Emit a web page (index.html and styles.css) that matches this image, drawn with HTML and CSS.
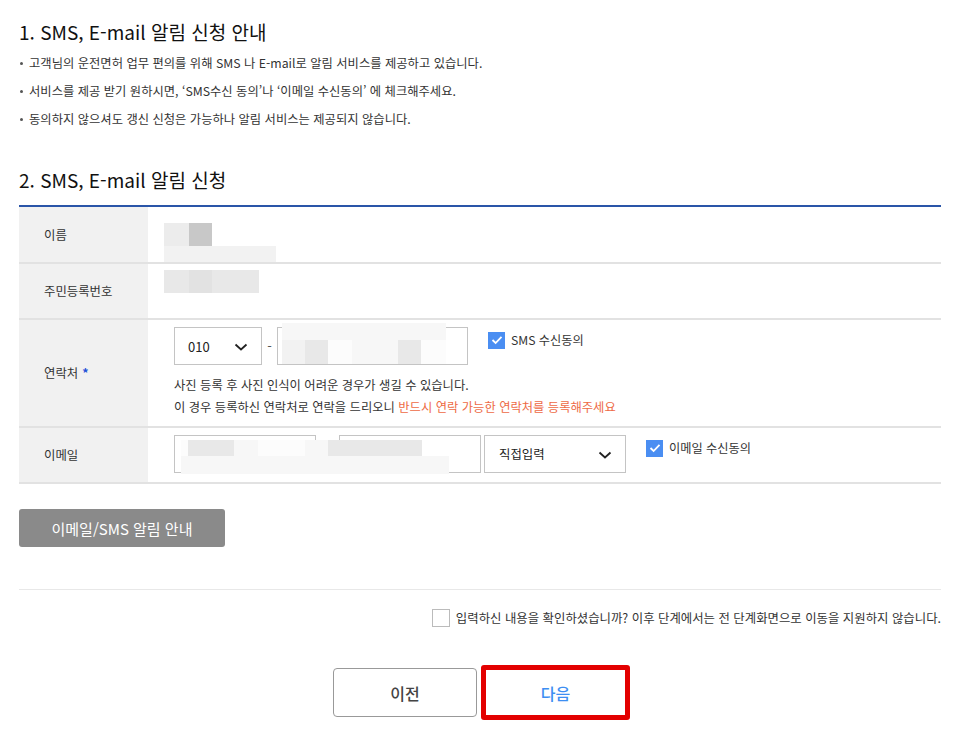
FILE: index.html
```html
<!DOCTYPE html>
<html lang="ko">
<head>
<meta charset="utf-8">
<title>SMS, E-mail 알림 신청</title>
<link rel="stylesheet" href="styles.css">
</head>
<body>
<div class="page">
  <h2 class="title">1. SMS, E-mail 알림 신청 안내</h2>
  <ul class="bullets">
    <li>고객님의 운전면허 업무 편의를 위해 SMS 나 E-mail로 알림 서비스를 제공하고 있습니다.</li>
    <li>서비스를 제공 받기 원하시면, ‘SMS수신 동의’나 ‘이메일 수신동의’ 에 체크해주세요.</li>
    <li>동의하지 않으셔도 갱신 신청은 가능하나 알림 서비스는 제공되지 않습니다.</li>
  </ul>

  <h2 class="title title-2">2. SMS, E-mail 알림 신청</h2>
  <div class="form-table">
    <div class="row row-name">
      <div class="label">이름</div>
      <div class="value">
        <div class="blur blur-name">
          <div class="blur-line"><span class="b w25 c1"></span><span class="b w23 c2"></span></div>
          <div class="blur-line"><span class="b w112 c5"></span></div>
        </div>
      </div>
    </div>
    <div class="row row-rrn">
      <div class="label">주민등록번호</div>
      <div class="value">
        <div class="blur blur-rrn">
          <div class="blur-line"><span class="b w25 c3"></span><span class="b w23 c4"></span><span class="b w24 c3"></span><span class="b w23 c3"></span></div>
        </div>
      </div>
    </div>
    <div class="row row-phone">
      <div class="label">연락처 <span class="req">*</span></div>
      <div class="value">
        <div class="controls">
          <div class="select sel-phone"><span>010</span>
            <svg class="chev" width="14" height="8" viewBox="0 0 14 8"><path d="M1.5 1.5 L7 6.5 L12.5 1.5" fill="none" stroke="#222" stroke-width="1.8"/></svg>
          </div>
          <span class="dash">-</span>
          <div class="input inp-phone">
            <div class="mask mask-phone">
              <div class="blur-line"><span class="b w164 c6"></span></div>
              <div class="blur-line"><span class="b w23 c5"></span><span class="b w23 c3"></span><span class="b w24 c7"></span><span class="b w46 c6"></span><span class="b w23 c3"></span><span class="b w25 c7"></span></div>
            </div>
          </div>
          <label class="check">
            <span class="box on"><svg width="12" height="10" viewBox="0 0 12 10"><path d="M1.5 5 L4.6 8 L10.5 1.8" fill="none" stroke="#fff" stroke-width="1.8"/></svg></span>
            <span>SMS 수신동의</span>
          </label>
        </div>
        <p class="help">사진 등록 후 사진 인식이 어려운 경우가 생길 수 있습니다.</p>
        <p class="help">이 경우 등록하신 연락처로 연락을 드리오니 <span class="warn">반드시 연락 가능한 연락처를 등록해주세요</span></p>
      </div>
    </div>
    <div class="row row-email">
      <div class="label">이메일</div>
      <div class="value">
        <div class="controls">
          <div class="email-wrap">
            <div class="input inp-email"></div>
            <div class="input inp-email inp-email2"></div>
            <div class="mask mask-email">
              <div class="blur-line"><span class="b w7 c7"></span><span class="b w46 c3"></span><span class="b w24 c6"></span><span class="b w47 c7"></span><span class="b w23 c6"></span><span class="b w94 c3"></span></div>
              <div class="blur-line"><span class="b w268 c6"></span></div>
            </div>
          </div>
          <div class="select sel-domain"><span>직접입력</span>
            <svg class="chev" width="14" height="8" viewBox="0 0 14 8"><path d="M1.5 1.5 L7 6.5 L12.5 1.5" fill="none" stroke="#222" stroke-width="1.8"/></svg>
          </div>
          <label class="check check-email">
            <span class="box on"><svg width="12" height="10" viewBox="0 0 12 10"><path d="M1.5 5 L4.6 8 L10.5 1.8" fill="none" stroke="#fff" stroke-width="1.8"/></svg></span>
            <span>이메일 수신동의</span>
          </label>
        </div>
      </div>
    </div>
  </div>

  <button class="guide-btn" type="button">이메일/SMS 알림 안내</button>

  <div class="divider"></div>

  <label class="confirm">
    <span class="box"></span>
    <span>입력하신 내용을 확인하셨습니까? 이후 단계에서는 전 단계화면으로 이동을 지원하지 않습니다.</span>
  </label>

  <div class="nav">
    <button class="btn-prev" type="button">이전</button>
    <button class="btn-next" type="button">다음</button>
  </div>
</div>
</body>
</html>
```

FILE: styles.css
```css
* { box-sizing: border-box; }
html, body { margin: 0; padding: 0; background: #fff; }
body {
  font-family: "Noto Sans CJK KR", "Noto Sans", sans-serif;
  color: #333;
}
.page {
  width: 922px;
  margin-left: 19px;
  padding-top: 20px;
}
.title {
  margin: 0;
  font-size: 19px;
  line-height: 24px;
  font-weight: 400;
  color: #111;
}
.title-2 { margin-top: 35px; }
.bullets {
  list-style: none;
  margin: 5px 0 0;
  padding: 0;
}
.bullets li {
  position: relative;
  padding-left: 10px;
  font-size: 12.3px;
  line-height: 28px;
  color: #333;
}
.bullets li::before {
  content: "";
  position: absolute;
  left: 1px;
  top: 13px;
  width: 3px;
  height: 3px;
  border-radius: 50%;
  background: #555;
}

.form-table {
  margin-top: 13px;
  border-top: 2px solid #2a55a8;
}
.row {
  display: flex;
  border-bottom: 2px solid #e2e2e2;
}
.label {
  width: 129px;
  flex: none;
  background: #f1f1f1;
  padding-left: 25px;
  font-size: 12.4px;
  color: #333;
  display: flex;
  align-items: center;
}
.req { color: #1d4fd8; font-weight: 700; margin-left: 4px; }
.value {
  flex: 1;
  padding: 7px 0 7px 26px;
}
.row-name .value { padding: 0 0 0 16px; height: 55px; }
.row-rrn .value { padding: 0 0 0 16px; height: 54px; }
.row-phone .value { padding-bottom: 8px; }
.row-email .value { padding-bottom: 9px; }

.blur-line { display: flex; }
.b { display: block; }
.blur-name { padding-top: 16px; }
.blur-name .blur-line:first-child { height: 23px; }
.blur-name .blur-line:last-child { height: 16px; }
.blur-rrn { padding-top: 6px; }
.blur-rrn .blur-line { height: 23px; }
.w7 { width: 7px; } .w23 { width: 23px; } .w24 { width: 24px; } .w25 { width: 25px; }
.w46 { width: 46px; } .w47 { width: 47px; } .w94 { width: 94px; } .w112 { width: 112px; }
.w164 { width: 164px; } .w268 { width: 268px; }
.c1 { background: #ececec; } .c2 { background: #c8c8c8; } .c3 { background: #e8e8e8; }
.c4 { background: #e2e2e2; } .c5 { background: #f2f2f2; } .c6 { background: #f7f7f7; }
.c7 { background: #fcfcfc; }

.controls {
  display: flex;
  align-items: flex-start;
}
.select, .input {
  height: 38px;
  border: 1px solid #c4c4c4;
  background: #fff;
}
.select {
  display: flex;
  align-items: center;
  justify-content: space-between;
  font-size: 13px;
  color: #222;
  padding: 0 13px 0 13px;
}
.sel-phone { width: 88px; }
.sel-domain { width: 142px; margin-left: 3px; padding-left: 14px; padding-right: 13px; font-size: 12.4px; }
.chev { margin-top: 1px; }
.dash {
  width: 15px;
  text-align: center;
  line-height: 38px;
  font-size: 13px;
  color: #555;
}
.input { position: relative; }
.inp-phone { width: 191px; }
.mask { position: absolute; }
.mask-phone { left: 4px; top: -5px; }
.mask-phone .blur-line:first-child { height: 17px; }
.mask-phone .blur-line:last-child { height: 24px; }

.email-wrap { position: relative; display: flex; gap: 23px; }
.inp-email { width: 142px; }
.inp-email2 { width: 142px; }
.mask-email { left: 7px; top: 5px; }
.mask-email .blur-line:first-child { height: 16px; }
.mask-email .blur-line:last-child { height: 18px; }

.check {
  display: flex;
  align-items: center;
  gap: 6px;
  margin-left: 20px;
  margin-top: 4px;
  font-size: 12.2px;
  color: #333;
}
.check-email { margin-left: 20px; }
.box {
  width: 17px;
  height: 17px;
  border: 1px solid #bdbdbd;
  background: #fff;
  display: flex;
  align-items: center;
  justify-content: center;
  flex: none;
}
.box.on { background: #4a8ef2; border-color: #4a8ef2; }

.help {
  margin: 0;
  font-size: 12.3px;
  line-height: 22px;
  color: #333;
}
.controls + .help { margin-top: 9px; }
.warn { color: #ee6a45; }

.guide-btn {
  display: block;
  margin-top: 25px;
  width: 206px;
  height: 38px;
  border: 0;
  border-radius: 3px;
  background: #8a8a8a;
  color: #fff;
  font-family: inherit;
  font-size: 15px;
  font-weight: 400;
}
.divider {
  margin-top: 42px;
  height: 1px;
  background: #e8e8e8;
}
.confirm {
  display: flex;
  justify-content: flex-end;
  align-items: center;
  gap: 6px;
  margin-top: 19px;
  font-size: 12.4px;
  color: #333;
}
.confirm .box { width: 18px; height: 18px; border-color: #bbb; }

.nav {
  display: flex;
  justify-content: center;
  align-items: center;
  gap: 4px;
  margin-top: 38px;
  padding-left: 3px;
}
.btn-prev, .btn-next {
  font-family: inherit;
  font-size: 16px;
  font-weight: 500;
  background: #fff;
}
.btn-prev {
  width: 144px;
  height: 49px;
  border: 1px solid #999;
  border-radius: 4px;
  color: #444;
}
.btn-next {
  width: 149px;
  height: 55px;
  border: 5px solid #e30000;
  border-radius: 3px;
  color: #3d8ef2;
}
```
